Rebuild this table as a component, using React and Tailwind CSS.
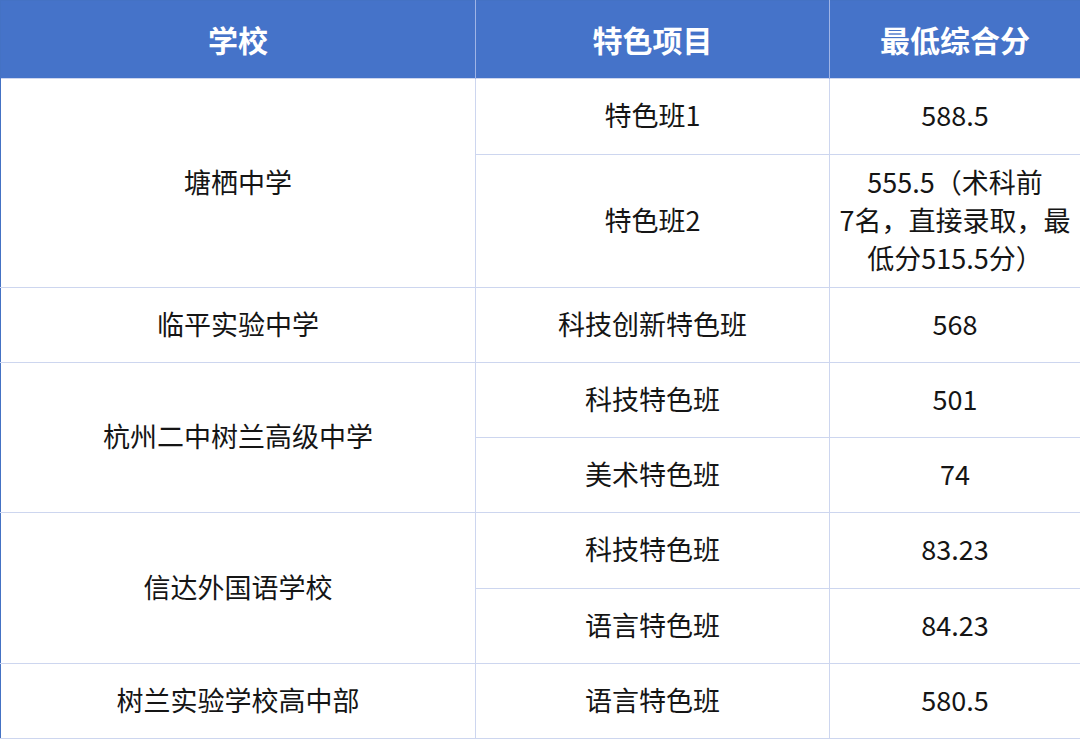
import React from 'react';

// score table: school / program / minimum composite score
const rows = [
    { school: '塘栖中学', items: [
        { name: '特色班1', score: ['588.5'], h: 'h-[76px]' },
        { name: '特色班2', score: ['555.5（术科前', '7名，直接录取，最', '低分515.5分）'], h: 'h-[133px]' },
    ] },
    { school: '临平实验中学', items: [
        { name: '科技创新特色班', score: ['568'], h: 'h-[75px]' },
    ] },
    { school: '杭州二中树兰高级中学', items: [
        { name: '科技特色班', score: ['501'], h: 'h-[75px]' },
        { name: '美术特色班', score: ['74'], h: 'h-[75px]' },
    ] },
    { school: '信达外国语学校', items: [
        { name: '科技特色班', score: ['83.23'], h: 'h-[76px]' },
        { name: '语言特色班', score: ['84.23'], h: 'h-[75px]' },
    ] },
    { school: '树兰实验学校高中部', items: [
        { name: '语言特色班', score: ['580.5'], h: 'h-[75px]' },
    ] },
];

const cell = 'border border-[#cdd6ef] pb-[3px] text-center align-middle font-normal text-[27px] leading-[38px] text-[#151515]';

const App = () => {
    return (
        <div className="w-[1080px] h-[739px] bg-white overflow-hidden" style={{ fontFamily: '"Noto Sans CJK SC", "Noto Sans", sans-serif' }}>
            <table className="w-[1080px] table-fixed border-collapse border border-[#4472c4]">
                <colgroup>
                    <col className="w-[475px]" />
                    <col className="w-[354px]" />
                    <col className="w-[251px]" />
                </colgroup>
                <thead>
                    <tr className="h-[78px] bg-[#4573c9] text-white">
                        <th className="border-r border-[#9fb4e6] text-[30px] font-bold">学校</th>
                        <th className="border-r border-[#9fb4e6] text-[30px] font-bold">特色项目</th>
                        <th className="text-[30px] font-bold">最低综合分</th>
                    </tr>
                </thead>
                <tbody>
                    {rows.map((r) =>
                        r.items.map((it, i) => (
                            <tr key={r.school + i} className={it.h}>
                                {i === 0 && (
                                    <td rowSpan={r.items.length} className={cell + ' border-l-[#4472c4]'}>{r.school}</td>
                                )}
                                <td className={cell}>{it.name}</td>
                                <td className={cell + ' border-r-[#4472c4] px-1'}>
                                    {it.score.map((s, k) => (
                                        <div key={k}>{s}</div>
                                    ))}
                                </td>
                            </tr>
                        ))
                    )}
                </tbody>
            </table>
        </div>
    );
};

export default App;
